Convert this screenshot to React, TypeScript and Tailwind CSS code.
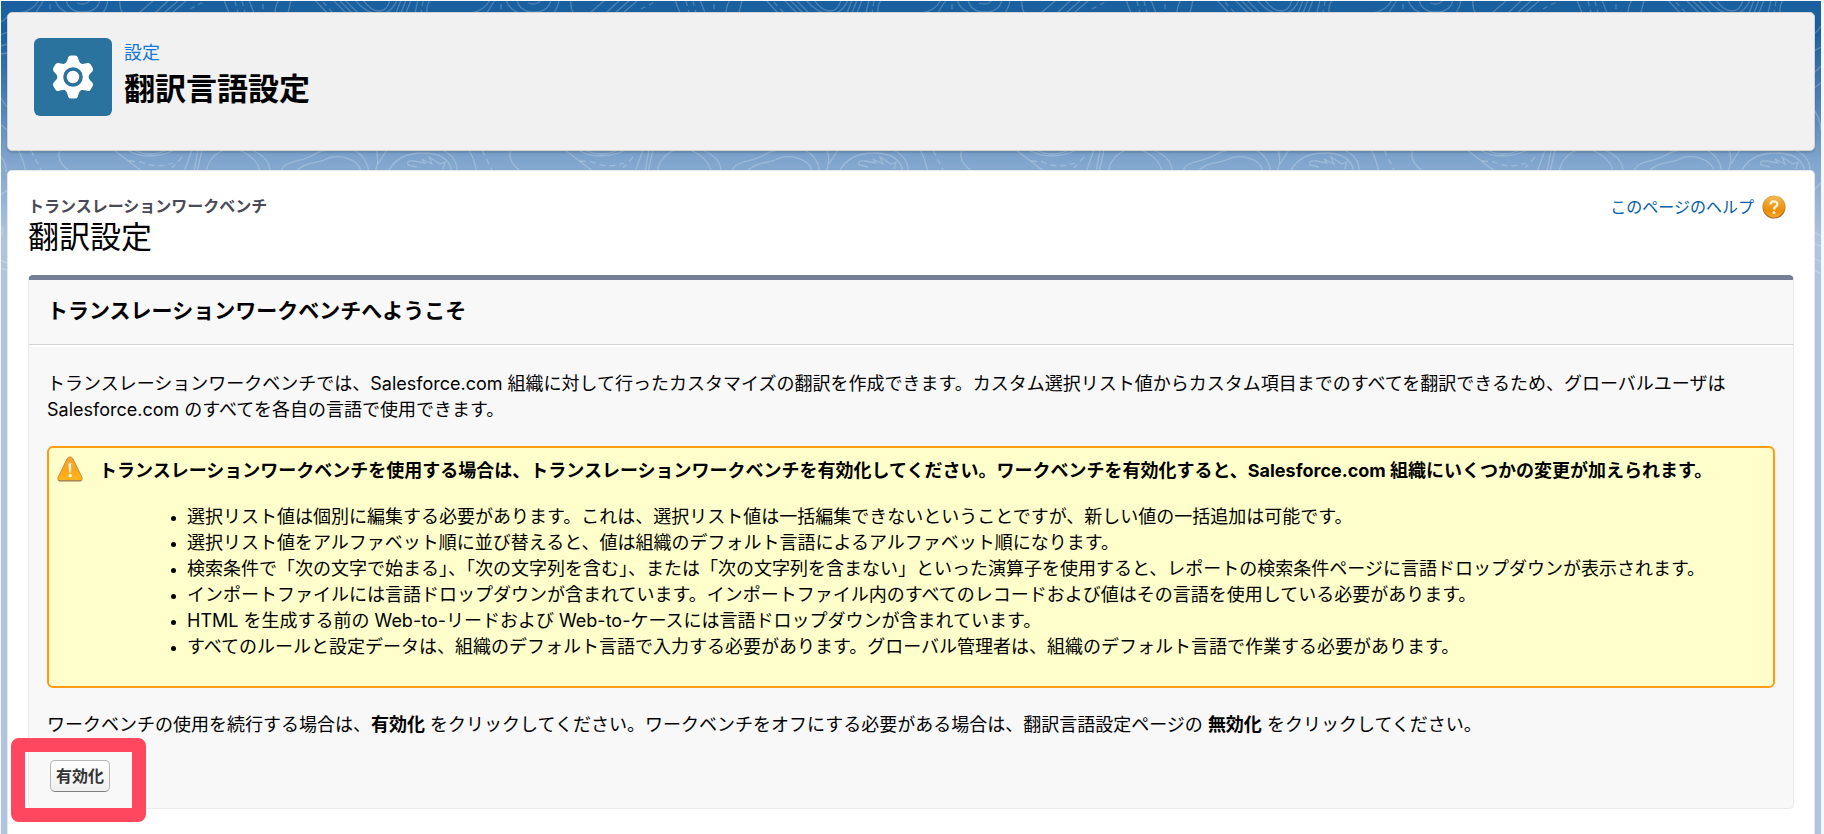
import React from "react";

const changes = [
  "選択リスト値は個別に編集する必要があります。これは、選択リスト値は一括編集できないということですが、新しい値の一括追加は可能です。",
  "選択リスト値をアルファベット順に並び替えると、値は組織のデフォルト言語によるアルファベット順になります。",
  "検索条件で「次の文字で始まる」、「次の文字列を含む」、または「次の文字列を含まない」といった演算子を使用すると、レポートの検索条件ページに言語ドロップダウンが表示されます。",
  "インポートファイルには言語ドロップダウンが含まれています。インポートファイル内のすべてのレコードおよび値はその言語を使用している必要があります。",
  "HTML を生成する前の Web-to-リードおよび Web-to-ケースには言語ドロップダウンが含まれています。",
  "すべてのルールと設定データは、組織のデフォルト言語で入力する必要があります。グローバル管理者は、組織のデフォルト言語で作業する必要があります。",
];

function ContourBackdrop() {
  return (
    <svg className="absolute inset-x-0 top-0 h-[300px] w-full" aria-hidden="true">
      <defs>
        <pattern id="contours" x="16" y="-1" width="451" height="300" patternUnits="userSpaceOnUse">
          <g fill="none" stroke="#ffffff" strokeOpacity="0.22" strokeWidth="1.3">
            <path d="M3 13Q16 11 22 0M18 14L27 0M38 0Q42 12 56 14M49 0Q52 12 66 12T83 0M60 3Q69 6 73 0M91 0Q90 8 85 14M103 0Q102 8 106 14" />
            <path d="M122 13L137 0M138 13L152 0M147 13L162 0M155 13L170 0M207 0L212 13M232 0L237 13M262 0Q258 6 258 13M274 0L271 13" />
            <path d="M298 0L310 13M316 0L329 13M322 0L335 13M328 0L341 13M338 0Q350 14 362 14T380 0M346 0Q354 11 362 11T373 0" />
            <path d="M384 0L379 13M389 0L384 13M394 0L389 13M401 0L398 13M413 0Q409 6 410 13" />
            <path strokeDasharray="5 4" d="M33 4V12M173 9L190 0M218 1L221 13M225 1L228 13M246 4V13M306 2L316 13M406 1L404 13" />
            <path d="M1 150Q7 160 9 174M43 150Q38 161 54 172M97 150L126 172M110 150Q131 162 158 150M117 150Q133 158 150 150M175 150L167 172M181 150L177 172M185 150L180 172" />
            <path d="M189 172Q192 156 207 150M222 150Q241 158 243 172M234 150Q253 157 253 172M264 172C266 160 283 163 296 155Q305 150 312 150M279 172C286 162 298 164 307 160C320 153 342 158 344 172M337 150Q350 157 352 172" />
            <path d="M359 150Q363 160 358 172M371 172Q380 153 406 153T435 172M370 150L361 164M425 150Q441 157 440 172M400 167L391 165Q389 160 397 161L408 163L405 159L415 164L412 157L423 164L428 162L426 169" />
            <path strokeDasharray="6 4" d="M14 150L24 170M112 161L124 162Q140 169 156 163M165 157L155 168" />
            <path d="M444 34Q448 31 451 26M444 51L451 47M444 73L451 66M444 88L451 83M444 110Q450 118 451 130M434 22Q438 21 441 17M434 35L442 32M434 46L442 44M434 54L442 53M434 97L441 107M434 124L441 130M434 195L442 190M434 225Q440 231 434 236M434 260L441 263M434 268L441 270M444 190L451 183M444 232L451 236M444 244L451 246M444 258L451 262M444 270L451 274" />
          </g>
        </pattern>
      </defs>
      <rect width="100%" height="300" fill="url(#contours)" />
    </svg>
  );
}

function GearIcon() {
  return (
    <svg viewBox="-39 -39 78 78" className="size-full" aria-hidden="true">
      <g fill="#ffffff">
        <circle r="15.2" />
        {[0, 60, 120, 180, 240, 300].map((angle) => (
          <path
            key={angle}
            transform={`rotate(${angle})`}
            d="M-9.5-12C-6-14-5.6-17-4.9-19.4Q-4.2-21.6-2-21.6H2Q4.2-21.6 4.9-19.4C5.6-17 6-14 9.5-12Z"
          />
        ))}
      </g>
      <circle r="8" fill="none" stroke="#2a739e" strokeWidth="3.6" />
    </svg>
  );
}

function HelpIcon() {
  return (
    <svg viewBox="0 0 24 24" className="size-6" aria-hidden="true">
      <defs>
        <linearGradient id="helpFill" x1="0" y1="0" x2="0" y2="1">
          <stop offset="0" stopColor="#f3b95a" />
          <stop offset="0.45" stopColor="#f09a18" />
          <stop offset="0.7" stopColor="#ee8c00" />
          <stop offset="1" stopColor="#f3ae3c" />
        </linearGradient>
        <linearGradient id="helpEdge" x1="0" y1="0" x2="0" y2="1">
          <stop offset="0" stopColor="#e8b050" />
          <stop offset="1" stopColor="#a8671c" />
        </linearGradient>
      </defs>
      <circle cx="12" cy="12" r="11" fill="url(#helpFill)" stroke="url(#helpEdge)" strokeWidth="1.2" />
      <path
        d="M8.6 9.4C8.6 5.4 15.4 5.4 15.4 9.3C15.4 11.6 12 11.6 12 14.4"
        fill="none"
        stroke="#fff3da"
        strokeWidth="2.4"
      />
      <circle cx="12" cy="17.5" r="1.5" fill="#fff3da" />
    </svg>
  );
}

function WarningIcon() {
  return (
    <svg viewBox="0 0 26 26" className="size-[26px] shrink-0" role="img" aria-label="警告">
      <defs>
        <linearGradient id="warnFill" x1="0" y1="0" x2="0" y2="1">
          <stop offset="0" stopColor="#f0a63c" />
          <stop offset="0.55" stopColor="#fba715" />
          <stop offset="1" stopColor="#ffb71c" />
        </linearGradient>
      </defs>
      <path
        d="M10.2 2.6Q13 -0.8 15.8 2.6L25 21.5Q25.6 25 23.5 25H2.5Q0.4 25 1 21.5Z"
        fill="url(#warnFill)"
        stroke="#d08a3c"
        strokeWidth="1"
      />
      <path d="M1.6 24.6H24.4" stroke="#a98a5c" strokeWidth="1.2" />
      <path d="M11.4 7.5H15.2L14.4 16.5H12.2Z" fill="#fff6dc" />
      <path d="M14.6 8L14 16.5" stroke="#b9a070" strokeWidth="0.8" />
      <circle cx="13.3" cy="19.6" r="1.8" fill="#fff6dc" />
    </svg>
  );
}

export default function App() {
  return (
    <div className="flex min-h-screen flex-col bg-[#f4f7fb] pt-px pr-[3px] pl-px font-[Inter,'Noto_Sans_CJK_JP',sans-serif] text-black">
      <div className="relative flex grow flex-col bg-[linear-gradient(to_bottom,#1a5f9e_0px,#1b60a0_30px,#4a7cb4_95px,#80a5cd_160px,#b0c4df_240px)] px-1.5 pt-[11px]">
        <ContourBackdrop />

        <header className="relative flex items-start gap-3 rounded-[5px] border border-[#d5d3d1] bg-[#f1f1f1] px-[26px] pt-[25px] pb-[34px] shadow-[0_2px_2px_rgba(0,0,0,0.14)]">
          <div className="size-[78px] shrink-0 rounded-md bg-[#2a739e]">
            <GearIcon />
          </div>
          <div className="pt-[3px]">
            <p className="text-[18px] leading-6 text-[#1278dc]">設定</p>
            <h1 className="text-[31px] leading-[48px] font-bold">翻訳言語設定</h1>
          </div>
        </header>

        <main className="relative mt-[19px] grow rounded-t-[5px] border border-b-0 border-[#e6e6e6] bg-white px-5 pt-6 pb-[25px]">
          <div className="flex items-start justify-between">
            <div>
              <p className="text-[16px] leading-[22px] font-bold text-[#4a4a56]">トランスレーションワークベンチ</p>
              <h2 className="text-[31px] leading-10">翻訳設定</h2>
            </div>
            <a href="#help" className="flex items-center gap-2 pr-2 text-[16px] leading-6 text-[#015ba7]">
              このページのヘルプ
              <HelpIcon />
            </a>
          </div>

          <section className="mt-[18px] rounded-[5px] border border-t-[5px] border-[#eaeaea] border-t-[#747e96] bg-[#f8f8f8]">
            <h3 className="border-b border-[#d4d4d4] px-[18px] pt-[15px] pb-[17px] text-[21px] leading-8 font-bold">
              トランスレーションワークベンチへようこそ
            </h3>

            <div className="border-t-2 border-white px-[18px] pt-6 pb-4 text-[18px] leading-[26px]">
              <p>
                トランスレーションワークベンチでは、Salesforce.com 組織に対して行ったカスタマイズの翻訳を作成できます。カスタム選択リスト値からカスタム項目までのすべてを翻訳できるため、グローバルユーザは
                Salesforce.com のすべてを各自の言語で使用できます。
              </p>

              <div className="mt-[23px] rounded-md border-2 border-[#ff9c14] bg-[#ffffcc] px-2 pt-2 pb-[26px]">
                <div className="flex items-start gap-4">
                  <WarningIcon />
                  <p className="pt-0.5 font-bold">
                    トランスレーションワークベンチを使用する場合は、トランスレーションワークベンチを有効化してください。ワークベンチを有効化すると、Salesforce.com
                    組織にいくつかの変更が加えられます。
                  </p>
                </div>
                <ul className="mt-5 list-disc pl-[130px] marker:text-[14px]">
                  {changes.map((text) => (
                    <li key={text}>{text}</li>
                  ))}
                </ul>
              </div>

              <p className="mt-6">
                ワークベンチの使用を続行する場合は、<b>有効化</b> をクリックしてください。ワークベンチをオフにする必要がある場合は、翻訳言語設定ページの{" "}
                <b>無効化</b> をクリックしてください。
              </p>

              <div className="relative mt-[22px] ml-[3px] flex w-fit">
                <button
                  type="button"
                  className="rounded-[5px] border border-[#b5b5b5] border-b-[#7f7f7f] bg-linear-to-b from-white to-[#f0f0f0] px-[5px] py-1 text-[16px] leading-[22px] font-bold text-[#333333]"
                >
                  有効化
                </button>
                <span className="pointer-events-none absolute -top-[22px] -right-[36px] -bottom-[30px] -left-[39px] rounded-lg border-[14px] border-[#ff475f]" />
              </div>
            </div>
          </section>
        </main>
      </div>
    </div>
  );
}
